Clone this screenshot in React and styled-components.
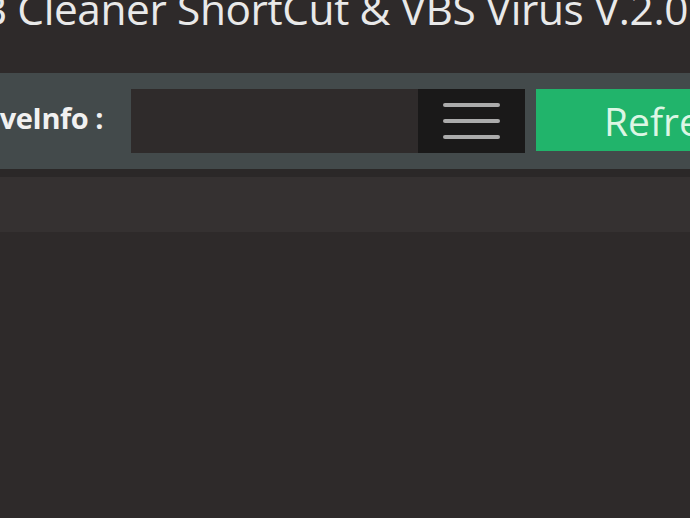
import React from 'react';
import styled, { createGlobalStyle } from 'styled-components';

const GlobalStyle = createGlobalStyle`
  html, body {
    margin: 0;
    padding: 0;
    background-color: #2e2a2a;
    overflow: hidden;
  }
  body {
    font-family: "Open Sans", "Noto Sans", sans-serif;
  }
`;

const Window = styled.div`
  width: 690px;
  height: 518px;
  display: flex;
  flex-direction: column;
  overflow: hidden;
  background-color: #2e2a2a;
`;

const TitleRow = styled.div`
  height: 73px;
  display: flex;
  justify-content: flex-end;
  align-items: flex-start;
  padding-right: 2px;
  overflow: hidden;
`;

const Title = styled.h1`
  margin: -20px 0 0 0;
  font-size: 42.4px;
  font-weight: 400;
  color: #e9e9e9;
  white-space: nowrap;
  letter-spacing: -0.4px;
`;

const Toolbar = styled.div`
  height: 96px;
  background-color: #434a4b;
  display: flex;
  align-items: center;
  overflow: hidden;
`;

const Label = styled.div`
  width: 103px;
  flex-shrink: 0;
  display: flex;
  justify-content: flex-end;
  overflow: hidden;
  margin-right: 28px;
  margin-top: -8px;
  font-size: 29px;
  font-weight: 700;
  color: #f1f1f1;
  white-space: nowrap;
  letter-spacing: -0.5px;
`;

const Field = styled.div`
  width: 287px;
  height: 64px;
  flex-shrink: 0;
  background-color: #2f2b2b;
`;

const MenuButton = styled.div`
  width: 107px;
  height: 64px;
  flex-shrink: 0;
  background-color: #1a1919;
  display: flex;
  flex-direction: column;
  align-items: center;
  justify-content: center;
  gap: 12px;
`;

const Bar = styled.span`
  display: block;
  width: 57px;
  height: 4px;
  border-radius: 2px;
  background-color: #ababab;
`;

const RefreshButton = styled.div`
  width: 260px;
  height: 62px;
  flex-shrink: 0;
  margin-left: 11px;
  margin-top: -2px;
  background-color: #21b46b;
  color: #dcf6e4;
  font-size: 39px;
  display: flex;
  align-items: center;
  padding-left: 68px;
  box-sizing: border-box;
  white-space: nowrap;
`;

const Divider = styled.div`
  height: 8px;
  background-color: #2b2828;
`;

const Band = styled.div`
  height: 55px;
  background-color: #353131;
`;

const Content = styled.div`
  flex: 1;
  background-color: #2e2a2a;
`;

export default function App() {
  return (
    <Window>
      <GlobalStyle />
      <TitleRow>
        <Title>USB Cleaner ShortCut &amp; VBS Virus V.2.0</Title>
      </TitleRow>
      <Toolbar>
        <Label>DriveInfo :</Label>
        <Field />
        <MenuButton>
          <Bar />
          <Bar />
          <Bar />
        </MenuButton>
        <RefreshButton>Refresh</RefreshButton>
      </Toolbar>
      <Divider />
      <Band />
      <Content />
    </Window>
  );
}
